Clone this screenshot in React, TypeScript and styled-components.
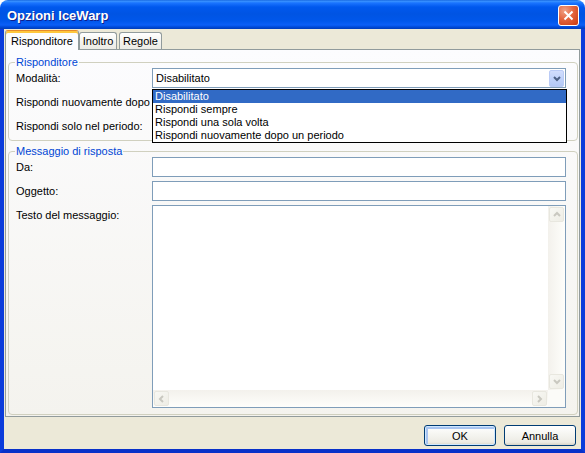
import React from 'react';
import styled, { createGlobalStyle } from 'styled-components';

const GlobalStyle = createGlobalStyle`
  * { box-sizing: border-box; }
  html, body { margin: 0; padding: 0; background: #ffffff; }
  body {
    font-family: "Liberation Sans", Arial, sans-serif;
    font-size: 11px;
    color: #000;
  }
`;

const Window = styled.div`
  width: 585px;
  height: 453px;
  display: flex;
  flex-direction: column;
  border-radius: 8px 8px 0 0;
  overflow: hidden;
`;

const TitleBar = styled.div`
  flex: none;
  height: 29px;
  display: flex;
  align-items: center;
  justify-content: space-between;
  padding: 1px 6px 0 7px;
  background: linear-gradient(
    to bottom,
    #0a5ad9 0px,
    #3d95ff 1px,
    #1a74ff 3px,
    #0058ee 7px,
    #0054e3 14px,
    #0057eb 21px,
    #0b5ff7 25px,
    #004ad9 27px,
    #003cb8 29px
  );
`;

const Title = styled.span`
  font-weight: bold;
  font-size: 13px;
  color: #fff;
  text-shadow: 1px 1px 0 #0f1f8c;
`;

const CloseButton = styled.div`
  width: 21px;
  height: 21px;
  border: 1px solid #fff;
  border-radius: 3px;
  background: radial-gradient(circle at 30% 25%, #f0a286 0%, #e3653f 45%, #c8390e 100%);
  display: flex;
  align-items: center;
  justify-content: center;
`;

const Frame = styled.div`
  flex: 1;
  display: flex;
  flex-direction: column;
  background: #ece9d8;
  border: 4px solid #0b3cdb;
  border-top: none;
  border-bottom-color: #0831c9;
`;

const TabStrip = styled.div`
  height: 20px;
  flex: none;
  display: flex;
  align-items: flex-end;
  padding-left: 1px;
`;

const Tab = styled.div<{ $active?: boolean; $w: number }>`
  position: relative;
  z-index: ${(p) => (p.$active ? 2 : 1)};
  width: ${(p) => p.$w}px;
  height: ${(p) => (p.$active ? 20 : 17)}px;
  margin-bottom: ${(p) => (p.$active ? -1 : 0)}px;
  margin-right: ${(p) => (p.$active ? 0 : 2)}px;
  border: 1px solid #919b9c;
  border-bottom: none;
  border-top-color: ${(p) => (p.$active ? '#e68b2c' : '#919b9c')};
  border-radius: 3px 3px 0 0;
  background: ${(p) =>
    p.$active ? '#fcfcfe' : 'linear-gradient(to bottom, #ffffff, #f3f2ed 60%, #ecebe5)'};
  box-shadow: ${(p) => (p.$active ? 'inset 0 2px 0 #ffc73c' : 'none')};
  display: flex;
  align-items: center;
  justify-content: center;
  padding-top: ${(p) => (p.$active ? 1 : 0)}px;
  white-space: nowrap;
`;

const Panel = styled.div`
  flex: none;
  height: 368px;
  margin: 0 1px;
  border: 1px solid #919b9c;
  background: linear-gradient(to bottom, #fcfcfe, #f4f3ee);
  padding: 6px 1px 2px 2px;
  display: flex;
  flex-direction: column;
`;

const Group = styled.fieldset<{ $gap?: number; $bottom?: number }>`
  margin: ${(p) => p.$gap ?? 0}px 0 0 0;
  border: 1px solid #d0d0bf;
  border-radius: 4px;
  padding: 0 11px ${(p) => p.$bottom ?? 4}px 7px;
  min-width: 0;
  flex: none;
`;

const Legend = styled.legend`
  color: #0046d5;
  line-height: 13px;
  padding: 0 1px;
  margin-left: -1px;
`;

const FormGrid = styled.div<{ $autoRows?: boolean }>`
  display: grid;
  grid-template-columns: 136px 1fr;
  grid-auto-rows: ${(p) => (p.$autoRows ? 'auto' : '20px')};
  row-gap: 4px;
  margin-top: -1px;
`;

const Label = styled.div<{ $top?: boolean }>`
  align-self: ${(p) => (p.$top ? 'start' : 'center')};
  line-height: ${(p) => (p.$top ? '20px' : '13px')};
  white-space: nowrap;
`;

const ComboWrap = styled.div`
  position: relative;
  z-index: 3;
`;

const Combo = styled.div`
  height: 20px;
  border: 1px solid #7f9db9;
  background: #fff;
  display: flex;
  align-items: center;
`;

const ComboValue = styled.span`
  flex: 1;
  padding-left: 3px;
`;

const ComboButton = styled.div`
  width: 15px;
  height: 17px;
  margin: 1px 1px 0 0;
  align-self: flex-start;
  border: 1px solid #bacbf6;
  border-radius: 2px;
  background: linear-gradient(to bottom, #d2defd, #c1d3fb 50%, #b4c8f6);
  display: flex;
  align-items: center;
  justify-content: center;
`;

const DropList = styled.ul`
  position: absolute;
  top: 21px;
  left: 0;
  right: -1px;
  margin: 0;
  padding: 0;
  list-style: none;
  background: #fff;
  border: 1px solid #000;
`;

const DropItem = styled.li<{ $selected?: boolean }>`
  height: 13px;
  line-height: 13px;
  padding-left: 2px;
  background: ${(p) => (p.$selected ? '#316ac5' : 'transparent')};
  color: ${(p) => (p.$selected ? '#fff' : '#000')};
  white-space: nowrap;
`;

const TextField = styled.div`
  height: 20px;
  border: 1px solid #7f9db9;
  background: #fff;
`;

const Memo = styled.div`
  border: 1px solid #7f9db9;
  background: #fff;
  display: grid;
  grid-template-columns: 1fr 17px;
  grid-template-rows: 1fr 17px;
  height: 203px;
`;

const MemoBody = styled.div`
  background: #fff;
`;

const Track = styled.div<{ $vertical?: boolean }>`
  display: flex;
  flex-direction: ${(p) => (p.$vertical ? 'column' : 'row')};
  justify-content: space-between;
  background: ${(p) =>
    p.$vertical
      ? 'linear-gradient(to right, #f3f1ec, #fefefb)'
      : 'linear-gradient(to bottom, #f3f1ec, #fefefb)'};
`;

const ScrollButton = styled.div`
  width: 15px;
  height: 15px;
  margin: 1px;
  border: 1px solid #e8e7df;
  border-radius: 2px;
  background: linear-gradient(to bottom right, #f8f8f4, #eeede5);
  display: flex;
  align-items: center;
  justify-content: center;
`;

const Corner = styled.div`
  background: #fbfbf8;
`;

const Footer = styled.div`
  flex: 1;
  display: flex;
  justify-content: flex-end;
  align-items: flex-start;
  gap: 8px;
  padding: 8px 5px 0 0;
`;

const Button = styled.div<{ $default?: boolean }>`
  width: 72px;
  height: 21px;
  border: 1px solid #003c74;
  border-radius: 3px;
  background: linear-gradient(to bottom, #ffffff, #f6f6f2 40%, #ecebe4 85%, #d8d3c7);
  box-shadow: ${(p) =>
    p.$default ? 'inset 0 0 0 1px #cee7ff, inset 1px 1px 0 2px #a8c4f0' : 'none'};
  display: flex;
  align-items: center;
  justify-content: center;
`;

type ChevronProps = { dir: 'up' | 'down' | 'left' | 'right'; color: string };

function Chevron({ dir, color }: ChevronProps) {
  const points = {
    up: '1,5 4,2 7,5',
    down: '1,2 4,5 7,2',
    left: '5,1 2,4 5,7',
    right: '2,1 5,4 2,7',
  }[dir];
  return (
    <svg width="8" height="8" viewBox="0 0 8 8">
      <polyline points={points} fill="none" stroke={color} strokeWidth="2" />
    </svg>
  );
}

const options = [
  'Disabilitato',
  'Rispondi sempre',
  'Rispondi una sola volta',
  'Rispondi nuovamente dopo un periodo',
];

export default function App() {
  return (
    <>
      <GlobalStyle />
      <Window>
        <TitleBar>
          <Title>Opzioni IceWarp</Title>
          <CloseButton>
            <svg width="11" height="11" viewBox="0 0 11 11">
              <path d="M1.5 1.5 L9.5 9.5 M9.5 1.5 L1.5 9.5" stroke="#fff" strokeWidth="2" />
            </svg>
          </CloseButton>
        </TitleBar>
        <Frame>
          <TabStrip>
            <Tab $active $w={74}>Risponditore</Tab>
            <Tab $w={38}>Inoltro</Tab>
            <Tab $w={43}>Regole</Tab>
          </TabStrip>
          <Panel>
            <Group>
              <Legend>Risponditore</Legend>
              <FormGrid>
                <Label>Modalità:</Label>
                <ComboWrap>
                  <Combo>
                    <ComboValue>Disabilitato</ComboValue>
                    <ComboButton>
                      <Chevron dir="down" color="#4d6185" />
                    </ComboButton>
                  </Combo>
                  <DropList>
                    {options.map((o, i) => (
                      <DropItem key={o} $selected={i === 0}>
                        {o}
                      </DropItem>
                    ))}
                  </DropList>
                </ComboWrap>
                <Label>Rispondi nuovamente dopo (</Label>
                <div />
                <Label>Rispondi solo nel periodo:</Label>
                <div />
              </FormGrid>
            </Group>
            <Group $gap={4} $bottom={6}>
              <Legend>Messaggio di risposta</Legend>
              <FormGrid $autoRows>
                <Label>Da:</Label>
                <TextField />
                <Label>Oggetto:</Label>
                <TextField />
                <Label $top>Testo del messaggio:</Label>
                <Memo>
                  <MemoBody />
                  <Track $vertical>
                    <ScrollButton>
                      <Chevron dir="up" color="#c9c8c0" />
                    </ScrollButton>
                    <ScrollButton>
                      <Chevron dir="down" color="#c9c8c0" />
                    </ScrollButton>
                  </Track>
                  <Track>
                    <ScrollButton>
                      <Chevron dir="left" color="#c9c8c0" />
                    </ScrollButton>
                    <ScrollButton>
                      <Chevron dir="right" color="#c9c8c0" />
                    </ScrollButton>
                  </Track>
                  <Corner />
                </Memo>
              </FormGrid>
            </Group>
          </Panel>
          <Footer>
            <Button $default>OK</Button>
            <Button>Annulla</Button>
          </Footer>
        </Frame>
      </Window>
    </>
  );
}
